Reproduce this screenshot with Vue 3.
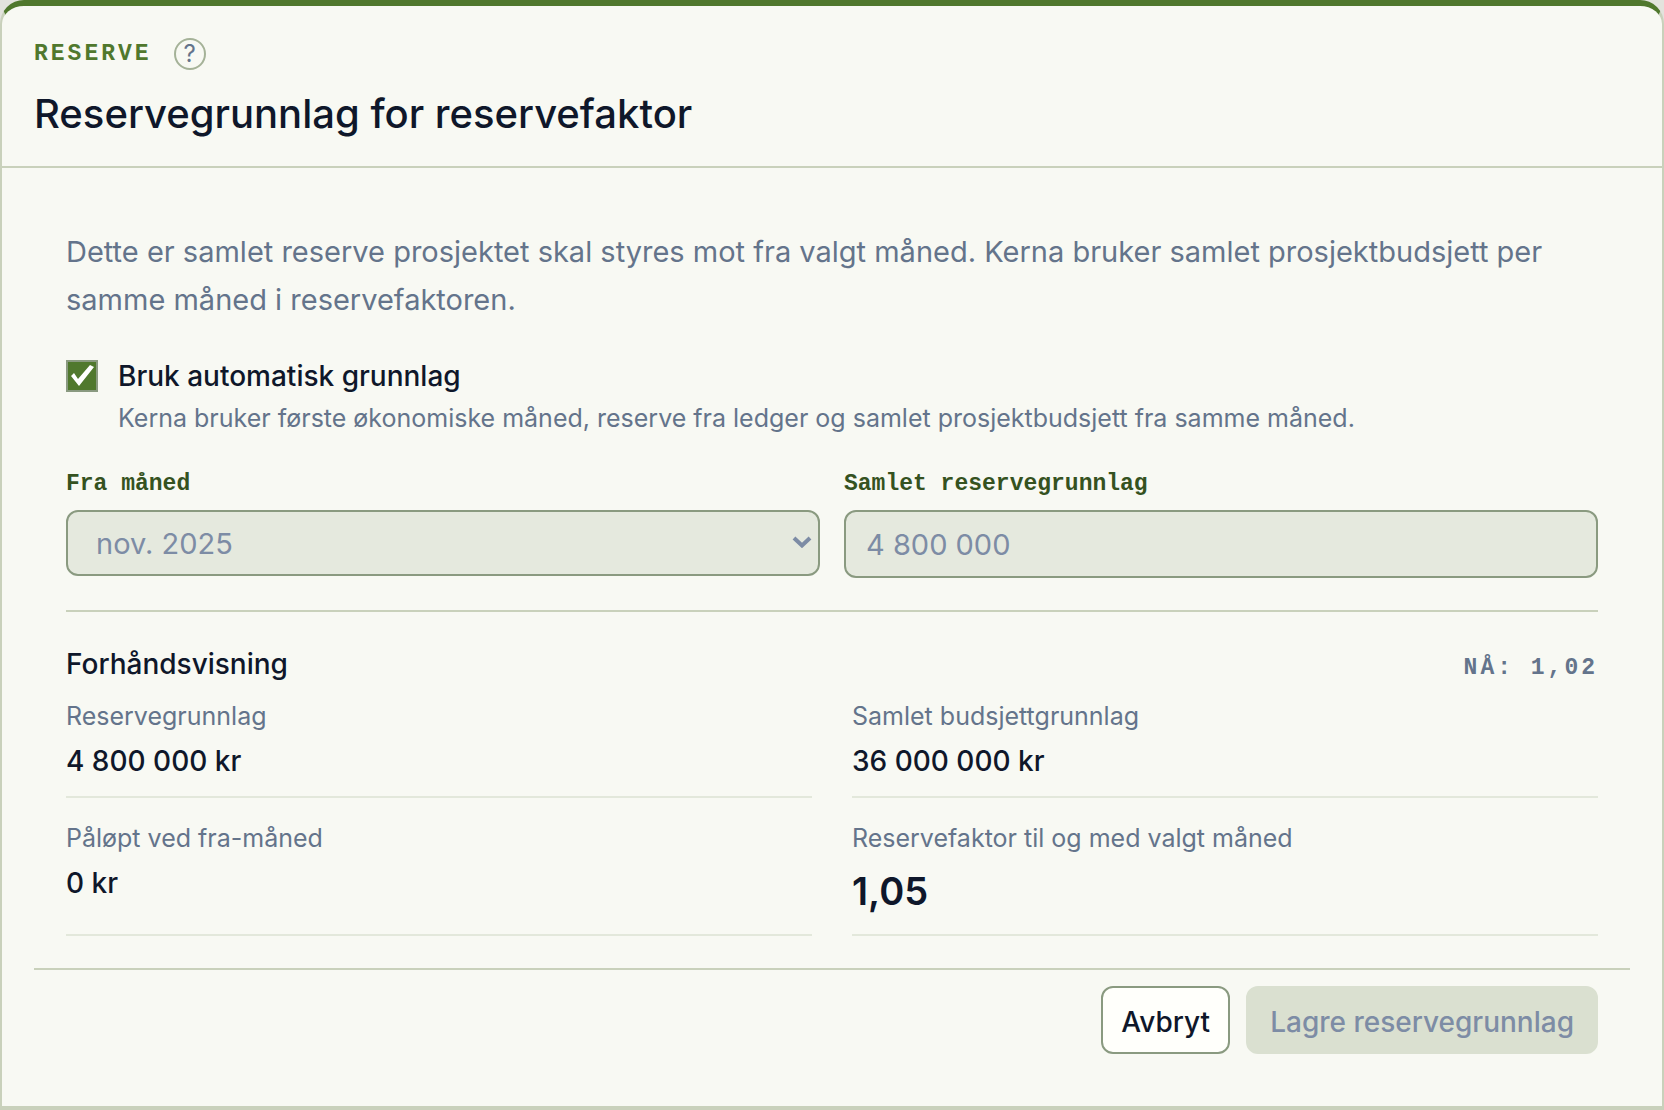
<script setup>
import { ref } from 'vue'

const automatic = ref(true)
const month = ref('2025-11')
const reserve = ref('4 800 000')

const preview = [
  { label: 'Reservegrunnlag', value: '4 800 000 kr' },
  { label: 'Samlet budsjettgrunnlag', value: '36 000 000 kr' },
  { label: 'Påløpt ved fra-måned', value: '0 kr' },
  { label: 'Reservefaktor til og med valgt måned', value: '1,05', large: true },
]
</script>

<template>
  <section class="dialog" role="dialog" aria-labelledby="dialog-title">
    <header class="head">
      <div class="eyebrow-row">
        <span class="eyebrow">RESERVE</span>
        <button class="help" type="button" aria-label="Hjelp">?</button>
      </div>
      <h1 id="dialog-title">Reservegrunnlag for reservefaktor</h1>
    </header>

    <form class="body" @submit.prevent>
      <p class="intro">
        Dette er samlet reserve prosjektet skal styres mot fra valgt måned. Kerna bruker samlet prosjektbudsjett per samme måned i reservefaktoren.
      </p>

      <div class="option">
        <input id="automatic" v-model="automatic" class="check" type="checkbox" aria-describedby="automatic-hint" />
        <div class="option-text">
          <label for="automatic">Bruk automatisk grunnlag</label>
          <p id="automatic-hint" class="hint">
            Kerna bruker første økonomiske måned, reserve fra ledger og samlet prosjektbudsjett fra samme måned.
          </p>
        </div>
      </div>

      <div class="fields">
        <div class="field">
          <label for="month">Fra måned</label>
          <div class="select-wrap">
            <select id="month" v-model="month" :disabled="automatic">
              <option value="2025-11">nov. 2025</option>
            </select>
            <svg class="chevron" viewBox="0 0 20 12" aria-hidden="true">
              <path d="M2 2 L10 9.5 L18 2" />
            </svg>
          </div>
        </div>
        <div class="field">
          <label for="reserve">Samlet reservegrunnlag</label>
          <input id="reserve" v-model="reserve" class="text-input" type="text" :disabled="automatic" />
        </div>
      </div>

      <section class="preview">
        <div class="preview-head">
          <h2>Forhåndsvisning</h2>
          <span class="now">NÅ: 1,02</span>
        </div>
        <dl class="figures">
          <div v-for="item in preview" :key="item.label" class="figure">
            <dt>{{ item.label }}</dt>
            <dd :class="{ large: item.large }">{{ item.value }}</dd>
          </div>
        </dl>
      </section>
    </form>

    <footer class="foot">
      <button class="btn secondary" type="button">Avbryt</button>
      <button class="btn primary" type="button" disabled>Lagre reservegrunnlag</button>
    </footer>
  </section>
</template>

<style>
body {
  background: #e3e3dd;
}
</style>

<style scoped>
.dialog,
.dialog * {
  box-sizing: border-box;
}

.dialog {
  --ink: #0f172a;
  --muted: #64748b;
  --disabled: #7d8ca5;
  --green: #50782d;
  --line: #c9d1bb;
  --control: #8a9a80;
  --mono: "Liberation Mono", monospace;
  display: flex;
  flex-direction: column;
  min-height: 100vh;
  border: 2px solid var(--line);
  border-top: 6px solid var(--green);
  border-bottom-width: 4px;
  border-radius: 24px 24px 0 0;
  background: #f8f9f3;
  color: var(--ink);
  font-family: Inter, sans-serif;
  font-size: 28px;
}

h1,
h2,
p,
dl,
dd {
  margin: 0;
}

button,
input,
select {
  margin: 0;
  font-family: inherit;
}

.head {
  padding: 32px 32px 28px;
  border-bottom: 2px solid var(--line);
}

.eyebrow-row {
  display: flex;
  align-items: center;
  gap: 22px;
}

.eyebrow {
  color: var(--green);
  font-family: var(--mono);
  font-size: 23px;
  font-weight: 700;
  line-height: 32px;
  letter-spacing: 3px;
}

.help {
  width: 32px;
  height: 32px;
  padding: 0;
  border: 2px solid #a5b298;
  border-radius: 50%;
  background: none;
  color: var(--muted);
  font-size: 24px;
  line-height: 28px;
}

h1 {
  margin-top: 20px;
  font-size: 40px;
  font-weight: 500;
  line-height: 48px;
}

.body {
  padding: 60px 64px 32px;
}

.intro {
  color: var(--muted);
  font-size: 29px;
  line-height: 48px;
}

.option {
  display: flex;
  gap: 20px;
  margin-top: 32px;
}

.check {
  flex: none;
  width: 32px;
  height: 32px;
  margin-top: 4px;
  border: 2px solid var(--control);
  appearance: none;
  background: #fffffb;
}

.check:checked {
  background: var(--green);
}

.check:checked::before {
  content: "";
  display: block;
  width: 28px;
  height: 28px;
  background: #fff;
  clip-path: polygon(3px 14px, 6px 11px, 10px 17px, 22px 3px, 26px 5px, 11px 24px);
}

.option-text label {
  display: block;
  font-weight: 500;
  line-height: 40px;
}

.hint {
  color: var(--muted);
  font-size: 25px;
  line-height: 44px;
}

.fields {
  display: grid;
  grid-template-columns: 1fr 1fr;
  align-items: start;
  gap: 24px;
  margin-top: 28px;
}

.field label {
  display: block;
  margin-bottom: 10px;
  color: #35521f;
  font-family: var(--mono);
  font-size: 23px;
  font-weight: 700;
  line-height: 32px;
}

.select-wrap {
  position: relative;
}

select,
.text-input {
  display: block;
  width: 100%;
  border: 2px solid var(--control);
  border-radius: 12px;
  background: #e5e9de;
  color: var(--disabled);
  font-size: 29px;
  opacity: 1;
}

select {
  height: 66px;
  padding: 0 28px;
  appearance: none;
}

.text-input {
  height: 68px;
  padding: 0 20px;
}

.chevron {
  position: absolute;
  top: 26px;
  right: 8px;
  width: 20px;
  height: 12px;
  fill: none;
  stroke: var(--disabled);
  stroke-width: 4px;
  pointer-events: none;
}

.preview {
  margin-top: 32px;
  padding-top: 32px;
  border-top: 2px solid var(--line);
}

.preview-head {
  display: flex;
  align-items: baseline;
  justify-content: space-between;
}

h2 {
  font-size: 28px;
  font-weight: 500;
  line-height: 40px;
}

.now {
  color: var(--muted);
  font-family: var(--mono);
  font-size: 23px;
  font-weight: 700;
  line-height: 32px;
  letter-spacing: 3px;
}

.figures {
  display: grid;
  grid-template-columns: 1fr 1fr;
  column-gap: 40px;
  row-gap: 20px;
  margin-top: 12px;
}

.figure {
  padding-bottom: 14px;
  border-bottom: 2px solid #e3e8db;
}

dt {
  color: var(--muted);
  font-size: 25px;
  line-height: 40px;
}

dd {
  margin-top: 4px;
  font-weight: 500;
  line-height: 42px;
}

dd.large {
  font-size: 38px;
  font-weight: 600;
  line-height: 58px;
}

.foot {
  display: flex;
  justify-content: flex-end;
  gap: 16px;
  margin: 0 32px;
  padding: 16px 32px 52px;
  border-top: 2px solid var(--line);
}

.btn {
  height: 68px;
  padding: 4px 18px 0;
  border: 2px solid var(--control);
  border-radius: 12px;
  font-size: 28px;
  font-weight: 500;
}

.secondary {
  background: #fffffb;
  color: var(--ink);
}

.primary {
  padding: 4px 22px 0;
  border-color: #dae0d0;
  background: #dae0d0;
  color: var(--disabled);
}
</style>
